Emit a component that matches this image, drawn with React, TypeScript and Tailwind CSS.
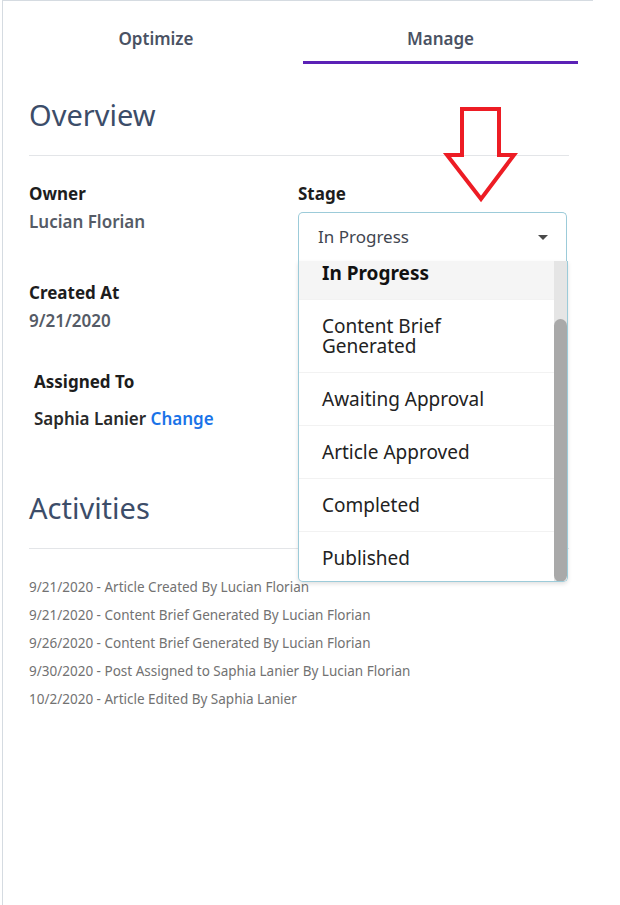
import React from "react"

const stages = ["In Progress", "Content Brief Generated", "Awaiting Approval", "Article Approved", "Completed", "Published"]

const activities = [
  "9/21/2020 - Article Created By Lucian Florian",
  "9/21/2020 - Content Brief Generated By Lucian Florian",
  "9/26/2020 - Content Brief Generated By Lucian Florian",
  "9/30/2020 - Post Assigned to Saphia Lanier By Lucian Florian",
  "10/2/2020 - Article Edited By Saphia Lanier",
]

function DownArrow() {
  return (
    <svg className="absolute left-[440px] top-[100px]" width="84" height="110" viewBox="440 100 84 110">
      <polygon
        points="462,109 499,109 499,155 514,155 481,199 447,155 462,155"
        fill="none"
        stroke="#ed1c24"
        strokeWidth="4"
        strokeLinejoin="miter"
      />
    </svg>
  )
}

export default function App() {
  return (
    <div className="relative w-[620px] h-[905px] bg-white font-['Noto_Sans',sans-serif] overflow-hidden">
      <div className="ml-[2px] w-[591px] h-full bg-white border-l border-t border-[#d5dbe1]">
        {/* tabs */}
        <div className="flex pt-[25px] pl-[16px]">
          <div className="w-[274px] h-[38px] flex justify-center items-start text-[17px] font-semibold text-[#4a5263]">
            Optimize
          </div>
          <div className="ml-[10px] w-[275px] h-[38px] flex justify-center items-start text-[17px] font-semibold text-[#4a5263] border-b-[3px] border-[#5b21b6]">
            Manage
          </div>
        </div>

        <div className="px-[26px]">
          {/* overview */}
          <h2 className="mt-[33px] text-[29px] leading-[36px] text-[#3c4d69]">Overview</h2>
          <div className="mt-[22px] w-[540px] border-t border-[#e3e5e8]" />

          <div className="flex mt-[26px]">
            <div className="w-[270px]">
              <div className="text-[17px] leading-[24px] font-bold text-[#1d1d1d]">Owner</div>
              <div className="mt-[4px] text-[17px] leading-[24px] font-semibold text-[#555b66]">Lucian Florian</div>

              <div className="mt-[47px] text-[17px] leading-[24px] font-bold text-[#1d1d1d]">Created At</div>
              <div className="mt-[4px] text-[17px] leading-[24px] font-semibold text-[#555b66]">9/21/2020</div>

              <div className="pl-[5px]">
                <div className="mt-[37px] text-[17px] leading-[24px] font-bold text-[#1d1d1d]">Assigned To</div>
                <div className="mt-[13px] text-[17px] leading-[24px] font-semibold text-[#2a2a2a]">
                  Saphia Lanier <span className="text-[#1a73e8]">Change</span>
                </div>
              </div>
            </div>

            <div className="relative w-[270px]">
              <div className="text-[17px] leading-[24px] font-bold text-[#1d1d1d]">Stage</div>
              <div className="mt-[6px] h-[49px] flex items-center justify-between pl-[19px] pr-[18px] border-x border-t border-[#9ccbd9] rounded-t-[5px] bg-white">
                <span className="text-[17px] text-[#3f4650]">In Progress</span>
                <span className="w-0 h-0 border-x-[5px] border-x-transparent border-t-[5px] border-t-[#4a4a4a]" />
              </div>

              {/* open menu */}
              <div className="absolute left-0 top-[79px] w-[270px] h-[321px] overflow-hidden bg-white border-x border-b border-[#9ccbd9] rounded-b-[5px] shadow-[0_2px_4px_rgba(0,0,0,0.12)] z-10">
                <div className="-mt-[14px] pr-[13px]">
                  {stages.map((s, i) => (
                    <div
                      key={s}
                      className={`px-[23px] py-4 text-[19px] leading-[20px] border-b border-[#f2f2f2] ${
                        i === 0 ? "bg-[#f5f5f5] font-bold text-[#111]" : "text-[#222]"
                      } ${i === 1 ? "pr-[60px]" : ""}`}
                    >
                      {s}
                    </div>
                  ))}
                </div>
                <div className="absolute right-0 top-0 w-[13px] h-full bg-[#e5e5e5]">
                  <div className="mt-[58px] h-[263px] rounded-full bg-[#a9a9a9]" />
                </div>
              </div>
            </div>
          </div>

          {/* activities */}
          <h2 className="mt-[59px] text-[29px] leading-[36px] text-[#3c4d69]">Activities</h2>
          <div className="mt-[22px] w-[540px] border-t border-[#e3e5e8]" />

          <div className="mt-[28px] flex flex-col gap-[8px]">
            {activities.map((a) => (
              <div key={a} className="text-[13.5px] leading-[20px] text-[#727272]">
                {a}
              </div>
            ))}
          </div>
        </div>
      </div>

      <DownArrow />
    </div>
  )
}
